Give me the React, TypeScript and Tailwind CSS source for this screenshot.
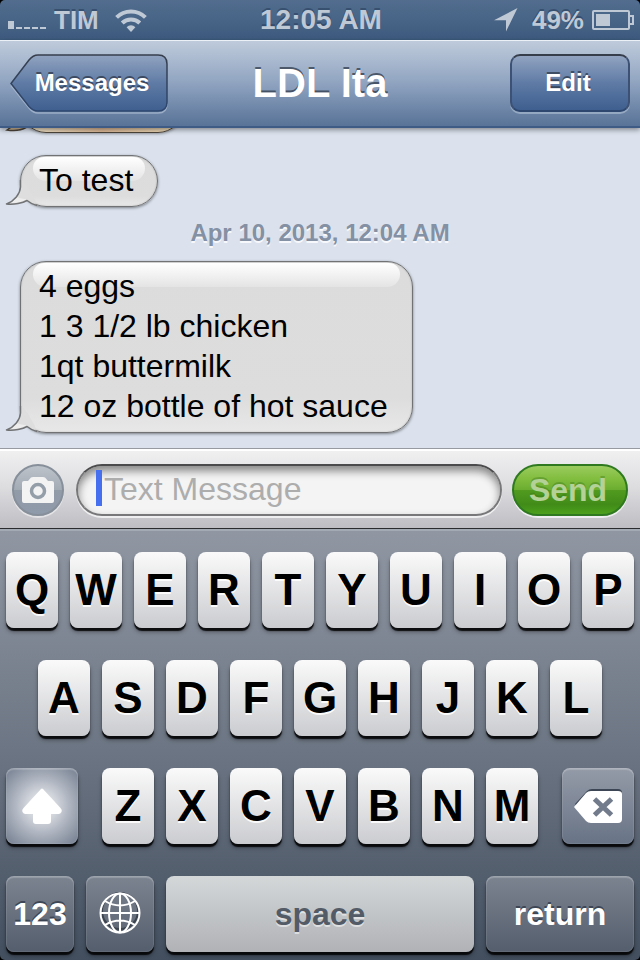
import React from "react";

const shadowDown = "[text-shadow:0_2px_0_rgba(255,255,255,0.9)]";
const shadowUp = "[text-shadow:0_-2px_0_rgba(40,50,65,0.7)]";

function StatusBar() {
  return (
    <div className="grid h-10 grid-cols-3 items-center bg-linear-to-b from-[#526d8e] to-[#3d5a7e] pr-1.5 pl-2 text-[26px] leading-10 font-bold text-[#bfc9d6] [text-shadow:0_-2px_0_rgba(30,50,80,0.45)]">
      <div className="flex items-center">
        <svg width="38" height="20" viewBox="0 0 38 20" fill="currentColor" aria-label="Signal">
          <path d="M0 11h6v8H0zM8 17h6v2H8zM16 17h6v2h-6zM24 17h6v2h-6zM32 17h6v2h-6z" />
        </svg>
        <span className="ml-2">TIM</span>
        <svg className="ml-4" width="32" height="24" viewBox="0 0 32 24" fill="none" stroke="currentColor" strokeWidth="4" aria-label="Wi-Fi">
          <path d="M1.6 9.4a20.4 20.4 0 0 1 28.8 0" />
          <path d="M7.2 15a12.5 12.5 0 0 1 17.6 0" />
          <path d="M16 24l-4.4-4.8a6.2 6.2 0 0 1 8.8 0z" fill="currentColor" stroke="none" />
        </svg>
      </div>
      <div className="text-center text-[28px]">12:05 AM</div>
      <div className="flex items-center justify-end">
        <svg width="24" height="24" viewBox="0 0 24 24" fill="currentColor" aria-label="Location">
          <path d="M23.5 0 12 23.5V12.3H0z" />
        </svg>
        <span className="ml-3.5">49%</span>
        <svg className="ml-2" width="42" height="20" viewBox="0 0 42 20" fill="none" stroke="currentColor" strokeWidth="2" aria-label="Battery">
          <rect x="1" y="1" width="36" height="18" rx="1" />
          <path d="M38 6h3v8h-3" />
          <rect x="4" y="4" width="14" height="12" fill="currentColor" stroke="none" />
        </svg>
      </div>
    </div>
  );
}

function NavBar() {
  return (
    <header className="relative z-10 flex h-22 items-center justify-between border-t border-b-2 border-t-[#eaf0f6] border-b-[#3d5b85] bg-linear-to-b from-[#bfcbdb] via-[#8fa3c0] to-[#587397] px-2.5 pb-px text-white shadow-[0_2px_5px_rgba(0,0,0,0.4)]">
      <button className={`relative h-[58px] w-[158px] pl-1.5 text-2xl font-bold ${shadowUp}`}>
        <svg className="absolute inset-0 -z-10" width="158" height="60" viewBox="0 0 158 60" fill="none">
          <defs>
            <linearGradient id="back" x1="0" y1="0" x2="0" y2="1">
              <stop offset="0" stopColor="#91a3c0" />
              <stop offset="0.5" stopColor="#5f7ba5" />
              <stop offset="1" stopColor="#3f5f90" />
            </linearGradient>
            <linearGradient id="backEdge" x1="0" y1="0" x2="0" y2="1">
              <stop offset="0" stopColor="#363e4c" />
              <stop offset="1" stopColor="#2e476f" />
            </linearGradient>
          </defs>
          <path d="M1 31.5 19 54Q23 59 28 59H148Q157 59 157 50" stroke="#a9b9d0" strokeOpacity="0.8" strokeWidth="1.5" />
          <path d="M1 29.5 19 6Q23 1 28 1H148Q157 1 157 10V48Q157 57 148 57H28Q23 57 19 52.5Z" fill="url(#back)" stroke="url(#backEdge)" strokeWidth="1.5" />
        </svg>
        Messages
      </button>
      <h1 className={`text-[40px] leading-none font-bold ${shadowUp}`}>LDL Ita</h1>
      <div className="flex w-[158px] justify-end">
        <button className={`h-[58px] w-[120px] rounded-[10px] border-2 border-t-[#363e4c] border-r-[#3c5173] border-b-[#2e476f] border-l-[#3c5173] bg-linear-to-b from-[#91a3c0] via-[#5f7ba5] to-[#3f5f90] pr-1 text-2xl font-bold shadow-[0_2px_0_rgba(180,195,215,0.6)] ${shadowUp}`}>
          Edit
        </button>
      </div>
    </header>
  );
}

function Tail() {
  return (
    <svg className="absolute -bottom-0.5 -left-4" width="34" height="30" viewBox="0 0 34 30" fill="none">
      <path d="M15.5 2V9C15 16 9.500 23 1.5 26C9 27 18 25 22 22.5C25 25 28 26.5 31 27.5L30 22L22 8L17 2Z" fill="#dedede" />
      <path d="M12 19C9.5 22 7.5 23.5 5 25C12 25.5 18 23.5 22 21C18 21 15 20.5 12 19Z" fill="#ededed" />
      <path d="M15.5 2V9C15 16 9.5 23 1.5 26C9 27 18 25 22 22.5C25 25 28 26.5 32 27.5" stroke="#707274" strokeWidth="1.5" strokeLinejoin="round" />
    </svg>
  );
}

function Bubble({ lines }: { lines: string[] }) {
  return (
    <div className="relative ml-5 w-fit rounded-[26px] border border-[#707274] bg-linear-to-b from-[#dcdcdc] via-[#dddddd] via-80% to-[#e8e8e8] pt-1 pr-6 pb-1.5 pl-[18px] text-[32px] leading-10 text-black shadow-[0_1px_3px_rgba(0,0,0,0.45),inset_0_0_2px_rgba(0,0,0,0.2)]">
      <div className="absolute inset-x-3 top-px h-6 rounded-t-[14px] rounded-b-[16px] bg-linear-to-b from-white to-[#e4e4e4]" />
      <Tail />
      <div className="relative">
        {lines.map((line) => (
          <p key={line}>{line}</p>
        ))}
      </div>
    </div>
  );
}

function Conversation() {
  return (
    <main className="flex-1 overflow-hidden bg-[#dbe2ed] pb-[15px]">
      <div className="flex h-[27px] items-start pl-5">
        <div className="relative -mt-[55px] h-[60px] w-[164px] rounded-[26px] border border-[#4d453b] bg-linear-to-r from-[#f3ecd2] via-[#dfba98] to-[#f3e4c2] shadow-[0_1px_3px_rgba(0,0,0,0.35)]">
          <svg className="absolute -bottom-0.5 -left-4" width="26" height="12" viewBox="0 0 26 12">
            <path d="M2 8Q8 4 11 0H25L22 5Q14 10 2 8Z" fill="#d5bd9b" stroke="#4d453b" strokeWidth="1.5" />
          </svg>
        </div>
      </div>
      <Bubble lines={["To test"]} />
      <p className="pt-2 pb-2.5 text-center text-2xl leading-9 font-bold text-[#8490a3] [text-shadow:0_2px_0_rgba(255,255,255,0.8)]">
        Apr 10, 2013, 12:04 AM
      </p>
      <Bubble lines={["4 eggs", "1 3 1/2 lb chicken", "1qt buttermilk", "12 oz bottle of hot sauce"]} />
    </main>
  );
}

function Composer() {
  return (
    <form onSubmit={(e) => e.preventDefault()} className="flex h-[81px] items-center gap-2.5 border-t border-b border-t-[#979ba1] border-b-[#292b2e] bg-linear-to-b from-[#f1f1f2] via-[#dcdcdf] to-[#bdbdc3] px-3 pt-[3px] shadow-[inset_0_2px_0_#fff]">
      <button type="button" aria-label="Camera" className="mr-0.5 flex size-[52px] shrink-0 items-center justify-center rounded-full border-2 border-[#868f9a] bg-[linear-gradient(#bdc3ca,#a2aab4_50%,#929ba8_50%,#8f9aaa)] shadow-[0_2px_0_rgba(255,255,255,0.5)]">
        <svg width="32" height="28" viewBox="0 0 32 28">
          <path d="M2 5H6L9 1.5Q10 1 11 1H21Q22 1 23 1.5L26 5H30Q32 5 32 7V25Q32 27 30 27H2Q0 27 0 25V7Q0 5 2 5Z" fill="#f3f3f4" />
          <circle cx="16" cy="15" r="6.5" fill="#f3f3f4" stroke="#949ea9" strokeWidth="3.5" />
        </svg>
      </button>
      <div className="flex h-[52px] min-w-0 flex-1 items-center gap-0.5 rounded-full border-2 border-t-[#4b4b4d] border-r-[#777779] border-b-[#77777a] border-l-[#777779] bg-[#f4f4f4] pr-4 pb-1 pl-[18px] shadow-[inset_0_5px_8px_rgba(0,0,0,0.45),0_2px_0_rgba(255,255,255,0.7)]">
        <span className="h-9 w-1.5 shrink-0 bg-[#456fee]" />
        <input aria-label="Text Message" placeholder="Text Message" className="h-10 min-w-0 flex-1 bg-transparent pt-0.5 text-[32px] leading-10 text-black outline-none placeholder:text-[#adadad] placeholder:opacity-100" />
      </div>
      <button className="h-[52px] w-[116px] shrink-0 rounded-full border-2 border-[#2f7a20] bg-[linear-gradient(#9acb5f,#83be40_25%,#6aac2f_50%,#529b20_50%,#418c19_80%,#4ca01b)] pr-1 text-[32px] leading-none font-bold text-[#b4d297] shadow-[0_2px_0_rgba(255,255,255,0.7)] [text-shadow:0_-2px_0_rgba(50,110,20,0.35)]">
        Send
      </button>
    </form>
  );
}

const keyBase = "flex h-[76px] items-center justify-center rounded-lg font-bold";
const lightKey = `${keyBase} shadow-[0_3px_1px_rgba(0,0,0,0.85),0_4px_4px_rgba(0,0,0,0.35)]`;
const darkKey = `${keyBase} text-white shadow-[inset_0_2px_1px_rgba(255,255,255,0.2),inset_0_0_0_1px_rgba(255,255,255,0.08),0_3px_1px_rgba(0,0,0,0.85),0_4px_4px_rgba(0,0,0,0.35)]`;

function LetterKeys({ letters }: { letters: string }) {
  return (
    <>
      {letters.split("").map((letter) => (
        <button key={letter} className={`${lightKey} min-w-0 flex-1 bg-linear-to-b from-[#fafafa] to-[#cbccd0] text-[44px] leading-none text-black ${shadowDown}`}>
          {letter}
        </button>
      ))}
    </>
  );
}

function Keyboard() {
  return (
    <section aria-label="Keyboard" className="flex flex-col gap-8 rounded-b-[5px] border-t-2 border-[#a4aab4] bg-linear-to-b from-[#9097a3] via-[#6d7684] to-[#434f5f] px-1.5 pt-[21px] pb-2">
      <div className="flex gap-3">
        <LetterKeys letters="QWERTYUIOP" />
      </div>
      <div className="flex gap-3 px-8">
        <LetterKeys letters="ASDFGHJKL" />
      </div>
      <div className="flex gap-6">
        <button aria-label="Shift" className={`${darkKey} w-18 shrink-0 bg-[radial-gradient(circle,#e3e5e9_15%,#b2b8c3_50%,#7e8898_90%)]`}>
          <svg width="42" height="36" viewBox="-0.5 0 42 36">
            <path d="M19.5 1 2 20Q0 22 1 24Q2 26 4 26H11.5V33Q11.5 36 14.5 36H26.5Q29.5 36 29.5 33V26H37Q39 26 40 24Q41 22 39 20L21.5 1Q20.5 0 19.5 1Z" fill="#fff" />
          </svg>
        </button>
        <div className="flex min-w-0 flex-1 gap-3">
          <LetterKeys letters="ZXCVBNM" />
        </div>
        <button aria-label="Delete" className={`${darkKey} w-18 shrink-0 bg-linear-to-b from-[#949ba7] to-[#687386]`}>
          <svg width="48" height="34" viewBox="0 0 48 34">
            <path d="M1 15 13 2Q15 0 18 0H44Q48 0 48 4V27Q48 31 44 31H18Q15 31 13 29Z" fill="#3c4655" />
            <path d="M0 18 12 4Q14 2 17 2H44Q48 2 48 5V30Q48 34 44 34H17Q14 34 12 32Z" fill="#fff" />
            <path d="M20.5 10 37.5 26M37.5 10 20.5 26" stroke="#717b8b" strokeWidth="5" />
          </svg>
        </button>
      </div>
      <div className="flex gap-3">
        <button className={`${darkKey} ${shadowUp} w-17 shrink-0 bg-linear-to-b from-[#7c8490] to-[#555e6d] text-[32px]`}>
          123
        </button>
        <button aria-label="Next keyboard" className={`${darkKey} w-17 shrink-0 bg-linear-to-b from-[#7c8490] to-[#555e6d]`}>
          <svg width="42" height="44" viewBox="0 0 42 44" fill="none">
            <circle cx="21" cy="19" r="18" stroke="#3c4450" strokeWidth="2" />
            <g stroke="#fff" strokeWidth="2">
              <circle cx="21" cy="21" r="19.5" />
              <ellipse cx="21" cy="21" rx="11" ry="19.5" />
              <path d="M21 1V41M1 21H41M6 9Q21 18 36 9M6 33Q21 24 36 33" />
            </g>
          </svg>
        </button>
        <button className={`${lightKey} min-w-0 flex-1 bg-linear-to-b from-[#d4d8d9] to-[#b0b2b5] text-[32px] text-[#535b67] [text-shadow:0_2px_0_rgba(255,255,255,0.5)]`}>
          space
        </button>
        <button className={`${darkKey} ${shadowUp} w-[148px] shrink-0 bg-linear-to-b from-[#7c8490] to-[#555e6d] text-[32px]`}>
          return
        </button>
      </div>
    </section>
  );
}

export default function App() {
  return (
    <div className="flex min-h-screen flex-col bg-black font-['Liberation_Sans',Arial,sans-serif]">
      <div className="overflow-hidden rounded-t-[5px]">
        <StatusBar />
      </div>
      <NavBar />
      <Conversation />
      <Composer />
      <Keyboard />
    </div>
  );
}
